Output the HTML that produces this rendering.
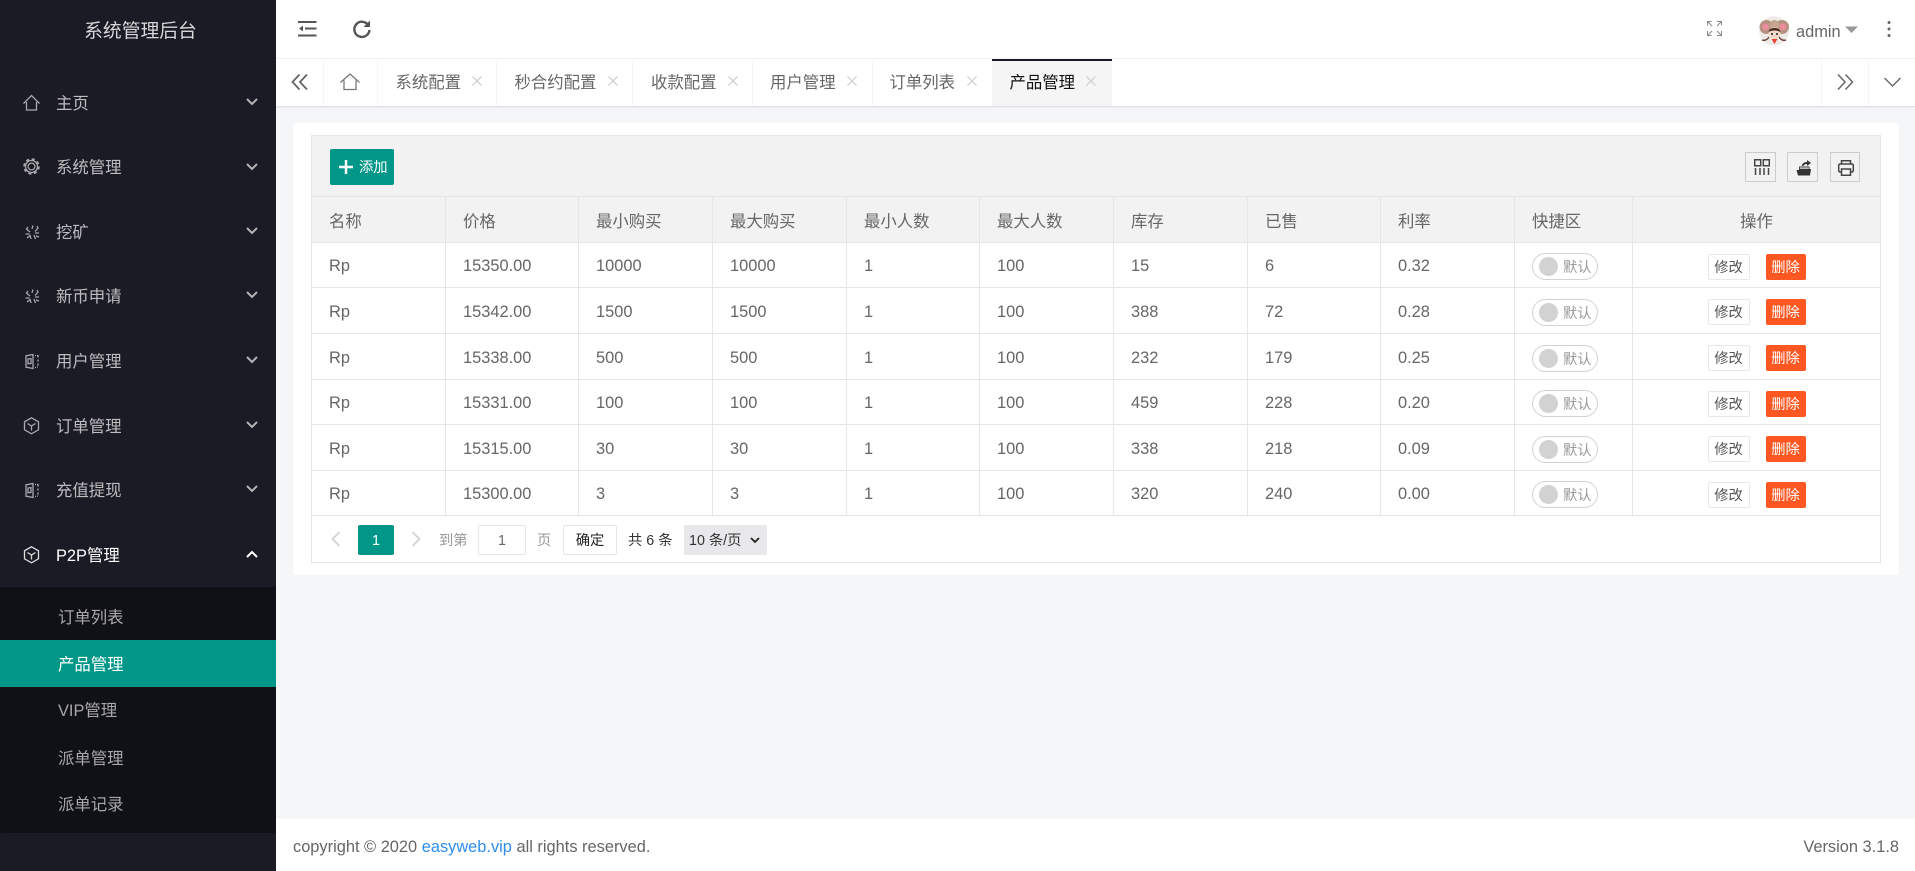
<!DOCTYPE html>
<html lang="zh-CN"><head><meta charset="utf-8"><title>系统管理后台</title>
<style>
*{box-sizing:border-box;margin:0;padding:0}
html,body{width:1915px;height:871px;overflow:hidden;background:#f5f6f8;font-family:"Liberation Sans","WenQuanYi Zen Hei","Noto Sans CJK SC",sans-serif;font-size:16.4px;color:#666}
.a{position:absolute;white-space:nowrap}
svg{position:absolute;overflow:visible;fill:none}
#side{position:absolute;left:0;top:0;width:276px;height:871px;background:#1a1b25}
#side .m{position:absolute;left:56px;height:24px;line-height:24px;color:#bdbdc0;white-space:nowrap}
#side .s{position:absolute;left:58px;height:24px;line-height:24px;color:#a8a8aa;white-space:nowrap}
#sub{position:absolute;left:0;top:587px;width:276px;height:246px;background:#101116;border-radius:2px}
#on{position:absolute;left:0;top:640px;width:276px;height:47px;background:#009688}
.ic{stroke:#a9a9ad;stroke-width:1.3}
.ch{stroke:#b5b5b8;stroke-width:2}
#top{position:absolute;left:276px;top:0;width:1639px;height:59px;background:#fff;border-bottom:1px solid #f3f3f3}
#tabs{position:absolute;left:276px;top:59px;width:1639px;height:47px;background:#fff;box-shadow:0 1px 2px rgba(0,0,0,.12)}
.v{position:absolute;top:60px;width:1px;height:46px;background:#f6f6f6}
.t{position:absolute;top:71px;height:24px;line-height:24px;color:#666;white-space:nowrap}
#act{position:absolute;left:992px;top:59px;width:120px;height:47px;background:#f5f5f6;border-top:2px solid #1a1b25}
#card{position:absolute;left:293px;top:123px;height:452px;width:1606px;background:#fff;border-radius:2px}
#bar{position:absolute;left:311px;top:135px;width:1570px;height:62px;background:#f2f2f2;border:1px solid #e6e6e6}
#add{position:absolute;left:330px;top:149px;width:64px;height:36px;background:#009688;border-radius:2px;color:#fff;font-size:14.3px;line-height:38px;padding-left:29px}
.tb{position:absolute;top:152px;height:30px;border:1px solid #ccc}
table{position:absolute;left:311px;top:197px;border-collapse:separate;border-spacing:0;table-layout:fixed;width:1570px;border-left:1px solid #e6e6e6}
td,th{border-right:1px solid #e6e6e6;border-bottom:1px solid #e6e6e6;padding:0 0 0 17px;text-align:left;font-weight:400;color:#666;font-size:16.4px;white-space:nowrap;vertical-align:middle}
td{padding-top:3px}
th{background:#f2f2f2}
td.c,th.c{padding-left:0;text-align:center}
.sw{display:inline-block;position:relative;width:66px;height:27px;border:1px solid #d2d2d2;border-radius:14px;vertical-align:middle}
.sw i{position:absolute;left:6px;top:3px;width:19px;height:19px;border-radius:50%;background:#d2d2d2}
.sw b{position:absolute;left:30px;top:0;font-weight:400;font-size:14.3px;line-height:28px;color:#999}
.bt{display:inline-block;height:26px;line-height:26.500px;font-size:14.3px;border-radius:2px;vertical-align:middle;text-align:center}
.ed{width:42px;border:1px solid #e9e9e9;color:#555;background:#fff;margin-right:16px}
.de{width:40px;line-height:28px;background:#ff5722;color:#fff}
#pg{position:absolute;left:311px;top:516px;width:1570px;height:47px;border:1px solid #e6e6e6;border-top:0}
.p{position:absolute;font-size:14.3px;line-height:32px;height:30px;white-space:nowrap}
#foot{position:absolute;left:276px;top:819px;width:1639px;height:52px;background:#fff}
</style></head><body>
<svg width="0" height="0" style="position:absolute"><defs>
<g id="home"><path d="M.5 9.5 8.5 1.5l8 8M3.5 8v8h10V8" /></g>
<g id="gear"><circle cx="8.5" cy="8.5" r="3.4"/><circle cx="8.5" cy="8.5" r="6"/><circle cx="8.5" cy="8.5" r="7.2" stroke-width="2.2" stroke-dasharray="3 2.65"/></g>
<g id="burst"><path d="M3 2 1.500 4 5 7M8 .5 7 4M12 1l1 2-3 3.500M.5 9h4M10 8h4M2 13l3-2.500L6 14M9 10l1.500 4M11 11l3 1"/></g>
<g id="book"><path d="M8 .5 1 1.800v11.400l7 1.300zM3 5l3-.4v4.800l-3 .4zM10 1.500h1M12 1.500h1v2M13 5.500v2M13 9.500v2M13 13h-1M11 13.500h-1"/></g>
<g id="cube"><path d="M8.500 .8 15.500 4.800v8L8.500 16.800l-7-4v-8zM4.500 6.500l4 2.500 4-2.500M8.500 9v4.500"/></g>
</defs></svg>

<div id="side">
<div class="a" style="left:0;width:276px;top:18px;text-align:center;padding-left:5px;font-size:18.8px;line-height:26px;color:#d8d8da">系统管理后台</div>
<svg class="ic" style="left:23px;top:94px" width="17" height="17"><use href="#home"/></svg><span class="m" style="top:92px">主页</span>
<svg class="ic" style="left:23px;top:158px" width="17" height="17"><use href="#gear"/></svg><span class="m" style="top:156px">系统管理</span>
<svg class="ic" style="left:25px;top:225px" width="14" height="14"><use href="#burst"/></svg><span class="m" style="top:221px">挖矿</span>
<svg class="ic" style="left:25px;top:289px" width="14" height="14"><use href="#burst"/></svg><span class="m" style="top:285px">新币申请</span>
<svg class="ic" style="left:25px;top:354px" width="14" height="14"><use href="#book"/></svg><span class="m" style="top:350px">用户管理</span>
<svg class="ic" style="left:23px;top:417px" width="17" height="17"><use href="#cube"/></svg><span class="m" style="top:415px">订单管理</span>
<svg class="ic" style="left:25px;top:483px" width="14" height="14"><use href="#book"/></svg><span class="m" style="top:479px">充值提现</span>
<svg class="ic" style="left:23px;top:546px;stroke:#ddd" width="17" height="17"><use href="#cube"/></svg><span class="m" style="top:544px;color:#fff">P2P管理</span>
<svg class="ch" style="left:246px;top:98px" width="12" height="8"><path d="M1 1l5 5 5-5"/></svg>
<svg class="ch" style="left:246px;top:163px" width="12" height="8"><path d="M1 1l5 5 5-5"/></svg>
<svg class="ch" style="left:246px;top:227px" width="12" height="8"><path d="M1 1l5 5 5-5"/></svg>
<svg class="ch" style="left:246px;top:291px" width="12" height="8"><path d="M1 1l5 5 5-5"/></svg>
<svg class="ch" style="left:246px;top:356px" width="12" height="8"><path d="M1 1l5 5 5-5"/></svg>
<svg class="ch" style="left:246px;top:421px" width="12" height="8"><path d="M1 1l5 5 5-5"/></svg>
<svg class="ch" style="left:246px;top:485px" width="12" height="8"><path d="M1 1l5 5 5-5"/></svg>
<svg class="ch" style="left:246px;top:550px;stroke:#fff" width="12" height="8"><path d="M1 7l5-5 5 5"/></svg>
<div id="sub"></div><div id="on"></div>
<span class="s" style="top:606px">订单列表</span>
<span class="s" style="top:653px;color:#fff">产品管理</span>
<span class="s" style="top:699px">VIP管理</span>
<span class="s" style="top:747px">派单管理</span>
<span class="s" style="top:793px">派单记录</span>
</div>

<div id="top"></div>
<svg style="left:298px;top:20px;stroke:#555;stroke-width:2" width="19" height="17"><path d="M0 2h18.500M7 8.500h11.500M0 15.500h18.500"/><path d="M1 8.500l4-3v6z" fill="#555" stroke="none"/></svg>
<svg style="left:352px;top:19px;stroke:#555;stroke-width:2.400" width="20" height="20"><path d="M16.500 6.500A7.600 7.600 0 1 0 17.500 11"/><path d="M18 1.500v6.500h-6.500z" fill="#555" stroke="none"/></svg>
<svg style="left:1707px;top:21px;stroke:#888;stroke-width:1" width="15" height="15"><path d="M.5 4.500V.5h4M1 1l4 4M10 .5h4.500v4M14 1l-4 4M.5 10v4.500h4M1 14l4-4M14.500 10v4.500H10M14 14l-4-4"/></svg>
<svg style="left:1759px;top:16px" width="30" height="30"><circle cx="15" cy="15" r="14.800" fill="#eeeae8"/><circle cx="7.500" cy="11" r="7" fill="#b5917f"/><circle cx="23" cy="11" r="7" fill="#b5917f"/><circle cx="6.500" cy="11" r="3.400" fill="#ea8c9e"/><circle cx="24" cy="11" r="3.400" fill="#ea8c9e"/><circle cx="15.500" cy="9" r="5" fill="#c5a491"/><path d="M3 24c3 1 5 0 7-3M27 24c-3 1-5 0-7-3" stroke="#6d4a3a" stroke-width="1.500"/><circle cx="15.500" cy="17" r="5.800" fill="#f6d8c6"/><path d="M9.700 16c0-5.500 11.600-5.500 11.600 0-3-2-8.600-2-11.600 0z" fill="#4a2c20"/><circle cx="13" cy="18" r="1" fill="#222"/><circle cx="18" cy="18" r="1" fill="#222"/><path d="M12.500 23h6l-3 5z" fill="#e8452c"/></svg>
<span class="a" style="left:1796px;top:19.500px;line-height:24px">admin</span>
<svg style="left:1845px;top:26px" width="13" height="8"><path d="M0 .5h13L6.500 7z" fill="#999"/></svg>
<svg style="left:1887px;top:20px" width="4" height="18"><circle cx="2" cy="2.500" r="1.500" fill="#666"/><circle cx="2" cy="9" r="1.500" fill="#666"/><circle cx="2" cy="15.500" r="1.500" fill="#666"/></svg>

<div id="tabs"></div>
<div id="act"></div>
<div class="v" style="left:323px"></div><div class="v" style="left:377px"></div><div class="v" style="left:496px"></div><div class="v" style="left:632px"></div><div class="v" style="left:752px"></div><div class="v" style="left:872px"></div><div class="v" style="left:1821px"></div><div class="v" style="left:1868px"></div>
<svg style="left:291px;top:74px;stroke:#666;stroke-width:1.800" width="18" height="16"><path d="M8.500 .5 1.500 8l7 7.500M16 .5 9 8l7 7.500"/></svg>
<svg style="left:340px;top:73px;stroke:#777;stroke-width:1.300" width="21" height="18"><path d="M.5 9.500 10 1l9.500 8.500M4 7.500V16.500h12V7.500"/></svg>
<span class="t" style="left:395.500px">系统配置</span><span class="t" style="left:514.500px">秒合约配置</span><span class="t" style="left:651px">收款配置</span><span class="t" style="left:770px">用户管理</span><span class="t" style="left:889.500px">订单列表</span><span class="t" style="left:1009.500px;color:#111">产品管理</span>
<svg style="left:472px;top:76px;stroke:#ccc;stroke-width:1.200" width="10" height="10"><path d="M.5 .5l9 9M9.500 .5l-9 9"/></svg>
<svg style="left:608px;top:76px;stroke:#ccc;stroke-width:1.200" width="10" height="10"><path d="M.5 .5l9 9M9.500 .5l-9 9"/></svg>
<svg style="left:728px;top:76px;stroke:#ccc;stroke-width:1.200" width="10" height="10"><path d="M.5 .5l9 9M9.500 .5l-9 9"/></svg>
<svg style="left:847px;top:76px;stroke:#ccc;stroke-width:1.200" width="10" height="10"><path d="M.5 .5l9 9M9.500 .5l-9 9"/></svg>
<svg style="left:967px;top:76px;stroke:#ccc;stroke-width:1.200" width="10" height="10"><path d="M.5 .5l9 9M9.500 .5l-9 9"/></svg>
<svg style="left:1086px;top:76px;stroke:#ccc;stroke-width:1.200" width="10" height="10"><path d="M.5 .5l9 9M9.500 .5l-9 9"/></svg>
<svg style="left:1837px;top:74px;stroke:#666;stroke-width:1.500" width="17" height="16"><path d="M1 .5 8 8l-7 7.500M8.500 .5 15.500 8l-7 7.500"/></svg>
<svg style="left:1884px;top:77px;stroke:#666;stroke-width:1.400" width="17" height="10"><path d="M.5 1 8.500 9l8-8"/></svg>

<div id="card"></div>
<div id="bar"></div>
<div id="add">添加</div>
<svg style="left:339px;top:160px;stroke:#fff;stroke-width:2.500" width="14" height="14"><path d="M7 0v14M0 7h14"/></svg>
<div class="tb" style="left:1745px;width:31px"><svg style="left:8px;top:6px;stroke:#444;stroke-width:1.500" width="16" height="16"><path d="M.7 .7h6v6h-6zM9.300 .7h6v6h-6zM1.500 9v7M6 9v7M10 9v7M14.500 9v7"/></svg></div>
<div class="tb" style="left:1787px;width:31px"><svg style="left:8px;top:7px" width="16" height="16"><path d="M3 6.500h10.500V9H15l-1 6.500H2L.5 10H3z" fill="#333"/><path d="M3.800 7.500h9v1.200h-9z" fill="#f2f2f2"/><path d="M6 6c0-2.500 2-4 5-4V0l4 3-4 3V4c-2 0-3 .8-3.500 2z" fill="#333"/></svg></div>
<div class="tb" style="left:1830px;width:30px"><svg style="left:7px;top:7px;stroke:#444;stroke-width:1.500" width="16" height="16"><path d="M3.500 4V.7h9V4M3.500 12H2.200A1.500 1.500 0 0 1 .7 10.500V5.500A1.500 1.500 0 0 1 2.200 4h11.600a1.500 1.500 0 0 1 1.500 1.500v5a1.500 1.500 0 0 1-1.500 1.500h-1.300M3.500 9h9v6.300h-9z"/></svg></div>

<table>
<colgroup><col style="width:134px"><col style="width:133px"><col style="width:134px"><col style="width:134px"><col style="width:133px"><col style="width:134px"><col style="width:134px"><col style="width:133px"><col style="width:134px"><col style="width:118px"><col style="width:248px"></colgroup>
<tr style="height:46px"><th>名称</th><th>价格</th><th>最小购买</th><th>最大购买</th><th>最小人数</th><th>最大人数</th><th>库存</th><th>已售</th><th>利率</th><th>快捷区</th><th class="c">操作</th></tr>
<tr style="height:45px"><td>Rp</td><td>15350.00</td><td>10000</td><td>10000</td><td>1</td><td>100</td><td>15</td><td>6</td><td>0.32</td><td><span class="sw"><i></i><b>默认</b></span></td><td class="c"><span class="bt ed">修改</span><span class="bt de">删除</span></td></tr>
<tr style="height:46px"><td>Rp</td><td>15342.00</td><td>1500</td><td>1500</td><td>1</td><td>100</td><td>388</td><td>72</td><td>0.28</td><td><span class="sw"><i></i><b>默认</b></span></td><td class="c"><span class="bt ed">修改</span><span class="bt de">删除</span></td></tr>
<tr style="height:46px"><td>Rp</td><td>15338.00</td><td>500</td><td>500</td><td>1</td><td>100</td><td>232</td><td>179</td><td>0.25</td><td><span class="sw"><i></i><b>默认</b></span></td><td class="c"><span class="bt ed">修改</span><span class="bt de">删除</span></td></tr>
<tr style="height:45px"><td>Rp</td><td>15331.00</td><td>100</td><td>100</td><td>1</td><td>100</td><td>459</td><td>228</td><td>0.20</td><td><span class="sw"><i></i><b>默认</b></span></td><td class="c"><span class="bt ed">修改</span><span class="bt de">删除</span></td></tr>
<tr style="height:46px"><td>Rp</td><td>15315.00</td><td>30</td><td>30</td><td>1</td><td>100</td><td>338</td><td>218</td><td>0.09</td><td><span class="sw"><i></i><b>默认</b></span></td><td class="c"><span class="bt ed">修改</span><span class="bt de">删除</span></td></tr>
<tr style="height:45px"><td>Rp</td><td>15300.00</td><td>3</td><td>3</td><td>1</td><td>100</td><td>320</td><td>240</td><td>0.00</td><td><span class="sw"><i></i><b>默认</b></span></td><td class="c"><span class="bt ed">修改</span><span class="bt de">删除</span></td></tr>
</table>

<div id="pg"></div>
<svg style="left:331px;top:531px;stroke:#d2d2d2;stroke-width:1.800" width="10" height="16"><path d="M8.500 1 1.500 8l7 7"/></svg>
<div class="p" style="left:358px;top:525px;width:36px;background:#009688;color:#fff;text-align:center;border-radius:2px">1</div>
<svg style="left:411px;top:531px;stroke:#d2d2d2;stroke-width:1.800" width="10" height="16"><path d="M1.500 1l7 7-7 7"/></svg>
<div class="p" style="left:439px;top:525px;color:#999">到第</div>
<div class="p" style="left:478px;top:525px;width:48px;border:1px solid #e6e6e6;border-radius:2px;text-align:center;line-height:30px;background:#fff;color:#666">1</div>
<div class="p" style="left:537px;top:525px;color:#999">页</div>
<div class="p" style="left:563px;top:525px;width:54px;border:1px solid #e6e6e6;border-radius:2px;text-align:center;line-height:31px;background:#fff;color:#222">确定</div>
<div class="p" style="left:628px;top:525px;color:#333">共 6 条</div>
<div class="p" style="left:684px;top:525px;width:83px;background:#e8e8eb;border-radius:2px;padding-left:5px;color:#333">10 条/页</div>
<svg style="left:750px;top:537px;stroke:#222;stroke-width:1.800" width="10" height="7"><path d="M1 1l4 4 4-4"/></svg>

<div id="foot"></div>
<span class="a" style="left:293px;top:835px;line-height:24px">copyright © 2020 <span style="color:#2f8df0">easyweb.vip</span> all rights reserved.</span>
<span class="a" style="right:16px;top:835px;line-height:24px">Version 3.1.8</span>
</body></html>
